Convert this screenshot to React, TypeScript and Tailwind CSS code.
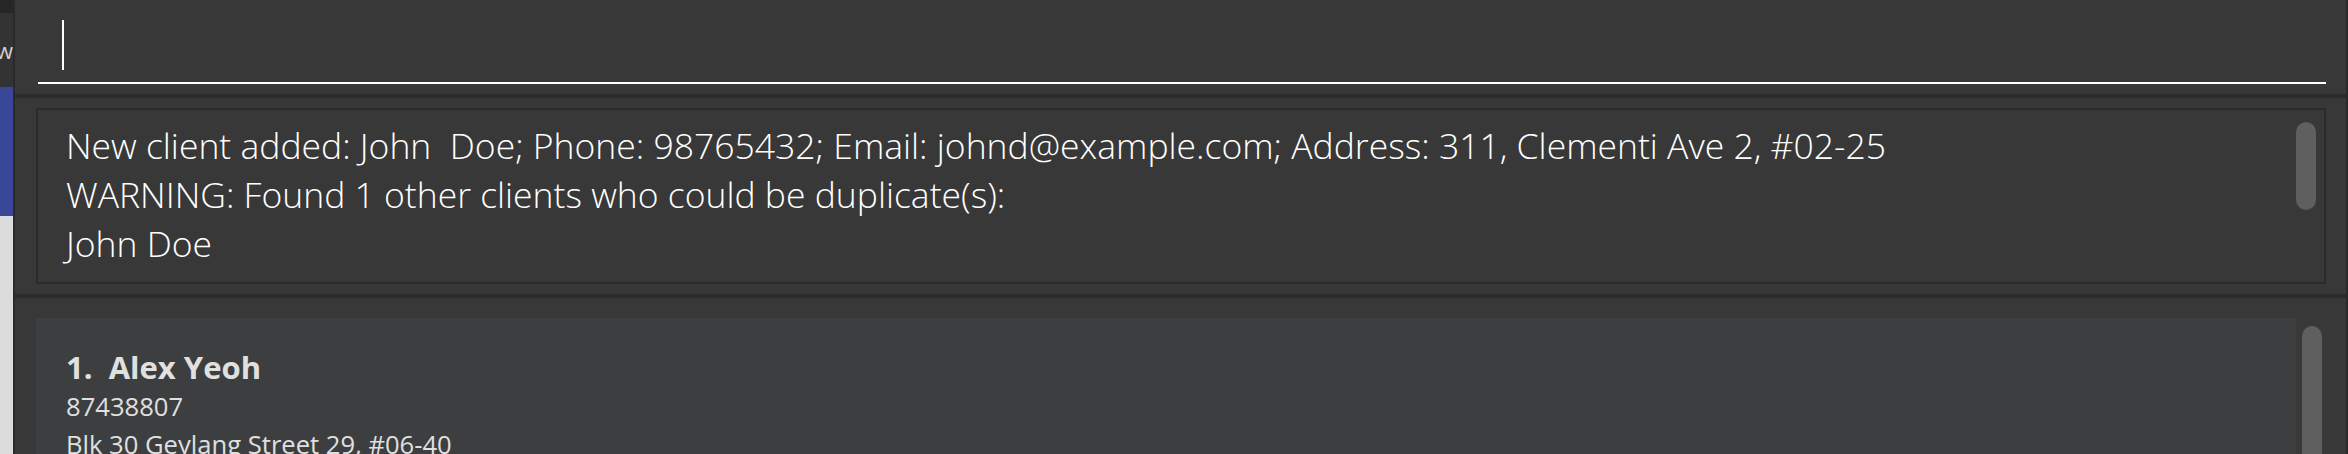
import React from 'react';

const resultLines = [
  'New client added: John  Doe; Phone: 98765432; Email: johnd@example.com; Address: 311, Clementi Ave 2, #02-25',
  'WARNING: Found 1 other clients who could be duplicate(s):',
  'John Doe',
];

const SideStrip: React.FC = () => (
  <div className="flex w-[13px] shrink-0 flex-col overflow-hidden">
    <div className="h-[13px] bg-[#262626]" />
    <div className="flex h-[74px] items-center bg-[#333333] text-[22px] leading-none text-[#d0d0d0]">
      <span className="-ml-[4px]">w</span>
    </div>
    <div className="h-[129px] bg-[#3a4799]" />
    <div className="flex-1 bg-[#dcdcdc]" />
  </div>
);

const CommandBox: React.FC = () => (
  <div className="h-[94px] shrink-0 pl-[23px] pr-[20px]">
    <div className="flex h-[84px] border-b-2 border-white pl-[24px] pt-[20px]">
      <div className="h-[50px] w-[2px] bg-white" />
    </div>
  </div>
);

const ResultDisplay: React.FC = () => (
  <div className="h-[196px] shrink-0 py-[10px] pl-[21px] pr-[20px]">
    <div className="flex h-full border-2 border-[#2b2b2b]">
      <div className="flex-1 pl-[28px] pt-[11px] text-[35.5px] font-light leading-[49px] text-white whitespace-pre">
        {resultLines.map((line) => (
          <div key={line}>{line}</div>
        ))}
      </div>
      <div className="mr-[8px] mt-[12px] h-[88px] w-[20px] rounded-[10px] bg-[#5f5f5f]" />
    </div>
  </div>
);

const ClientList: React.FC = () => (
  <div className="flex min-h-0 flex-1 pl-[21px] pr-[24px] pt-[20px]">
    <div className="flex-1 bg-[#3c3e3f] pl-[30px] pt-[28px] text-[#e0e0e0]">
      <div className="text-[31px] font-bold leading-[42px]">
        1.&nbsp;&nbsp;Alex Yeoh
      </div>
      <div className="text-[25.6px] leading-[38px]">87438807</div>
      <div className="text-[25.6px] leading-[38px]">Blk 30 Geylang Street 29, #06-40</div>
    </div>
    <div className="ml-[6px] mt-[8px] w-[20px] rounded-t-[10px] bg-[#5f5f5f]" />
  </div>
);

export default function App() {
  return (
    <div
      className="flex h-[454px] w-[2348px] overflow-hidden bg-[#383838]"
      style={{ fontFamily: '"Open Sans", "Noto Sans", sans-serif' }}
    >
      <SideStrip />
      <div className="w-[2px] shrink-0 bg-[#2a2a2a]" />
      <div className="flex min-w-0 flex-1 flex-col">
        <CommandBox />
        <div className="h-[4px] shrink-0 bg-[#2b2b2b]" />
        <ResultDisplay />
        <div className="h-[4px] shrink-0 bg-[#2b2b2b]" />
        <ClientList />
      </div>
      <div className="w-[2px] shrink-0 bg-[#2a2a2a]" />
    </div>
  );
}
